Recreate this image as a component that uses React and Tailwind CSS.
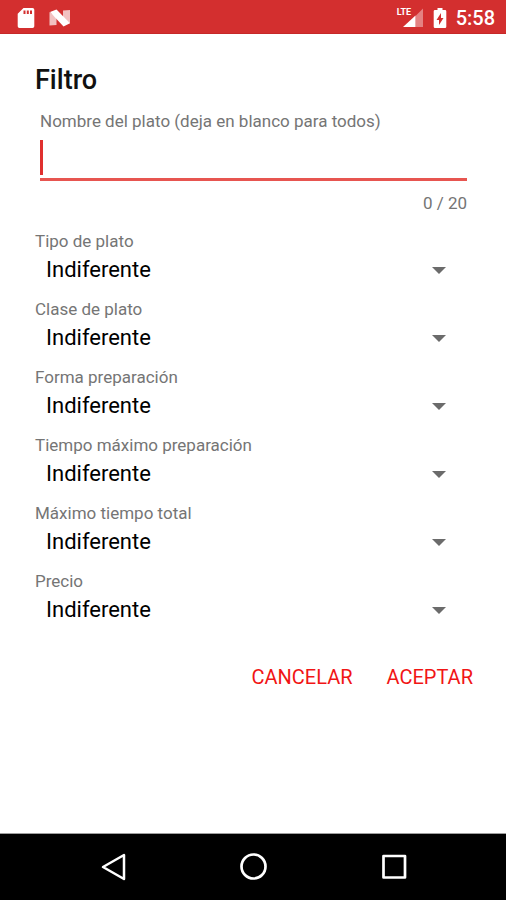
import { useState } from "react";

const MAX_LENGTH = 20;

const filters = [
  { id: "tipo", label: "Tipo de plato" },
  { id: "clase", label: "Clase de plato" },
  { id: "forma", label: "Forma preparación" },
  { id: "preparacion", label: "Tiempo máximo preparación" },
  { id: "total", label: "Máximo tiempo total" },
  { id: "precio", label: "Precio" },
];

function StatusBar() {
  return (
    <header className="flex h-[34px] items-center justify-between border-b border-[#c62828] bg-[#d32f2f] pt-[2px] pr-[11px] pl-[17px] text-white">
      <div className="flex items-center gap-[14px]">
        {/* SD card */}
        <svg className="h-[22px] w-[18px]" viewBox="0 0 18 22" aria-hidden="true">
          <path
            fill="currentColor"
            fillRule="evenodd"
            d="M6.500 1h9a1.800 1.800 0 0 1 1.800 1.800v16.400a1.800 1.800 0 0 1-1.800 1.800h-13a1.800 1.800 0 0 1-1.800-1.800V6.800zM6.500 3.500v3.500h2V3.500zM9.800 3.500v3.500h2V3.500zM13 3.500v3.500h2V3.500z"
          />
        </svg>
        {/* Android N */}
        <svg className="h-[18px] w-[22px]" viewBox="0 0 22 18" aria-hidden="true">
          <path fill="currentColor" fillOpacity="0.7" d="M0.500 3l7 5v8l-7 0.500zM14 1.500l7-0.500v13.500l-7-5z" />
          <path fill="currentColor" d="M1 3L7.500 0.500 21 14.200 14.500 17.500z" />
        </svg>
      </div>
      <div className="flex items-center gap-[9px]">
        {/* Mobile signal with the network type over its corner */}
        <div className="relative">
          <svg className="h-[22px] w-[27px]" viewBox="0 0 27 22" aria-hidden="true">
            <path fill="currentColor" fillOpacity="0.4" d="M18.500 9l7.500-7.500v18.500h-7.500z" />
            <path fill="currentColor" d="M18.500 8.500v11.500H6z" />
          </svg>
          <span className="absolute top-0 left-0 text-[9px] leading-[10px] font-bold">LTE</span>
        </div>
        {/* Battery charging */}
        <svg className="h-[22px] w-[14px]" viewBox="0 0 14 22" aria-hidden="true">
          <path
            fill="currentColor"
            fillRule="evenodd"
            d="M4.500 1h5v2H12a1.300 1.300 0 0 1 1.300 1.300v15.400A1.300 1.300 0 0 1 12 21H2a1.300 1.300 0 0 1-1.300-1.300V4.300A1.300 1.300 0 0 1 2 3h2.500zM8 6l-4.500 7H6v5l4.500-7H8z"
          />
        </svg>
        <span className="text-[20px] leading-6 font-medium">5:58</span>
      </div>
    </header>
  );
}

function FilterSelect({ id, label }) {
  return (
    <div className="flex flex-col gap-[5px]">
      <label htmlFor={id} className="text-[17px] leading-5 text-[#757575]">
        {label}
      </label>
      <div className="flex items-center pr-[27px] pl-[11px]">
        <select
          id={id}
          className="h-7 min-w-0 flex-1 appearance-none bg-transparent text-[22px] leading-7 text-black outline-none"
        >
          <option>Indiferente</option>
        </select>
        <svg className="pointer-events-none h-[7px] w-[14px] text-[#6b6b6b]" viewBox="0 0 14 7" aria-hidden="true">
          <path fill="currentColor" d="M0 0h14L7 7z" />
        </svg>
      </div>
    </div>
  );
}

function NavigationBar() {
  return (
    <nav className="flex h-[67px] items-center justify-between border-t border-[#9e9e9e] bg-black px-[98px] text-white">
      <button aria-label="Atrás">
        <svg className="h-7 w-7" viewBox="0 0 28 28" fill="none" stroke="currentColor" strokeWidth="2.500" strokeLinejoin="round">
          <path d="M26 2v24L5 14z" />
        </svg>
      </button>
      <button aria-label="Inicio">
        <svg className="h-7 w-7" viewBox="0 0 28 28" fill="none" stroke="currentColor" strokeWidth="2.700">
          <circle cx="14.500" cy="13.500" r="12" />
        </svg>
      </button>
      <button aria-label="Recientes">
        <svg className="h-7 w-7" viewBox="0 0 28 28" fill="none" stroke="currentColor" strokeWidth="2.700" strokeLinejoin="round">
          <path d="M3.500 3h21.500v21.500h-21.500z" />
        </svg>
      </button>
    </nav>
  );
}

export default function App() {
  const [name, setName] = useState("");

  return (
    <div className="flex min-h-screen flex-col bg-white font-[Roboto,sans-serif]">
      <StatusBar />

      <main className="flex-1 pt-[30px] pr-[33px] pl-[35px]">
        <h1 className="text-[27px] leading-8 font-medium text-[#111111]">Filtro</h1>

        <div className="mt-[15px] flex flex-col pr-[6px] pl-[5px]">
          <label htmlFor="nombre" className="text-[17px] leading-5 text-[#757575]">
            Nombre del plato (deja en blanco para todos)
          </label>
          <div className="mt-[9px] flex h-[41px] border-b-[3px] border-[#e75550]">
            {name === "" && <span className="h-[35px] w-[3px] bg-[#e0302f]" />}
            <input
              id="nombre"
              type="text"
              maxLength={MAX_LENGTH}
              value={name}
              onChange={(e) => setName(e.target.value)}
              className="h-[35px] min-w-0 flex-1 text-[22px] text-black caret-[#e53935] outline-none"
            />
          </div>
          <p className="mt-3 text-right text-[17px] leading-5 text-[#757575]">
            {name.length} / {MAX_LENGTH}
          </p>
        </div>

        <div className="mt-[18px] flex flex-col gap-[15px]">
          {filters.map((filter) => (
            <FilterSelect key={filter.id} id={filter.id} label={filter.label} />
          ))}
        </div>

        <div className="mt-[41px] flex justify-end gap-[34px] text-[20px] leading-6 text-[#f11515]">
          <button>CANCELAR</button>
          <button>ACEPTAR</button>
        </div>
      </main>

      <NavigationBar />
    </div>
  );
}
